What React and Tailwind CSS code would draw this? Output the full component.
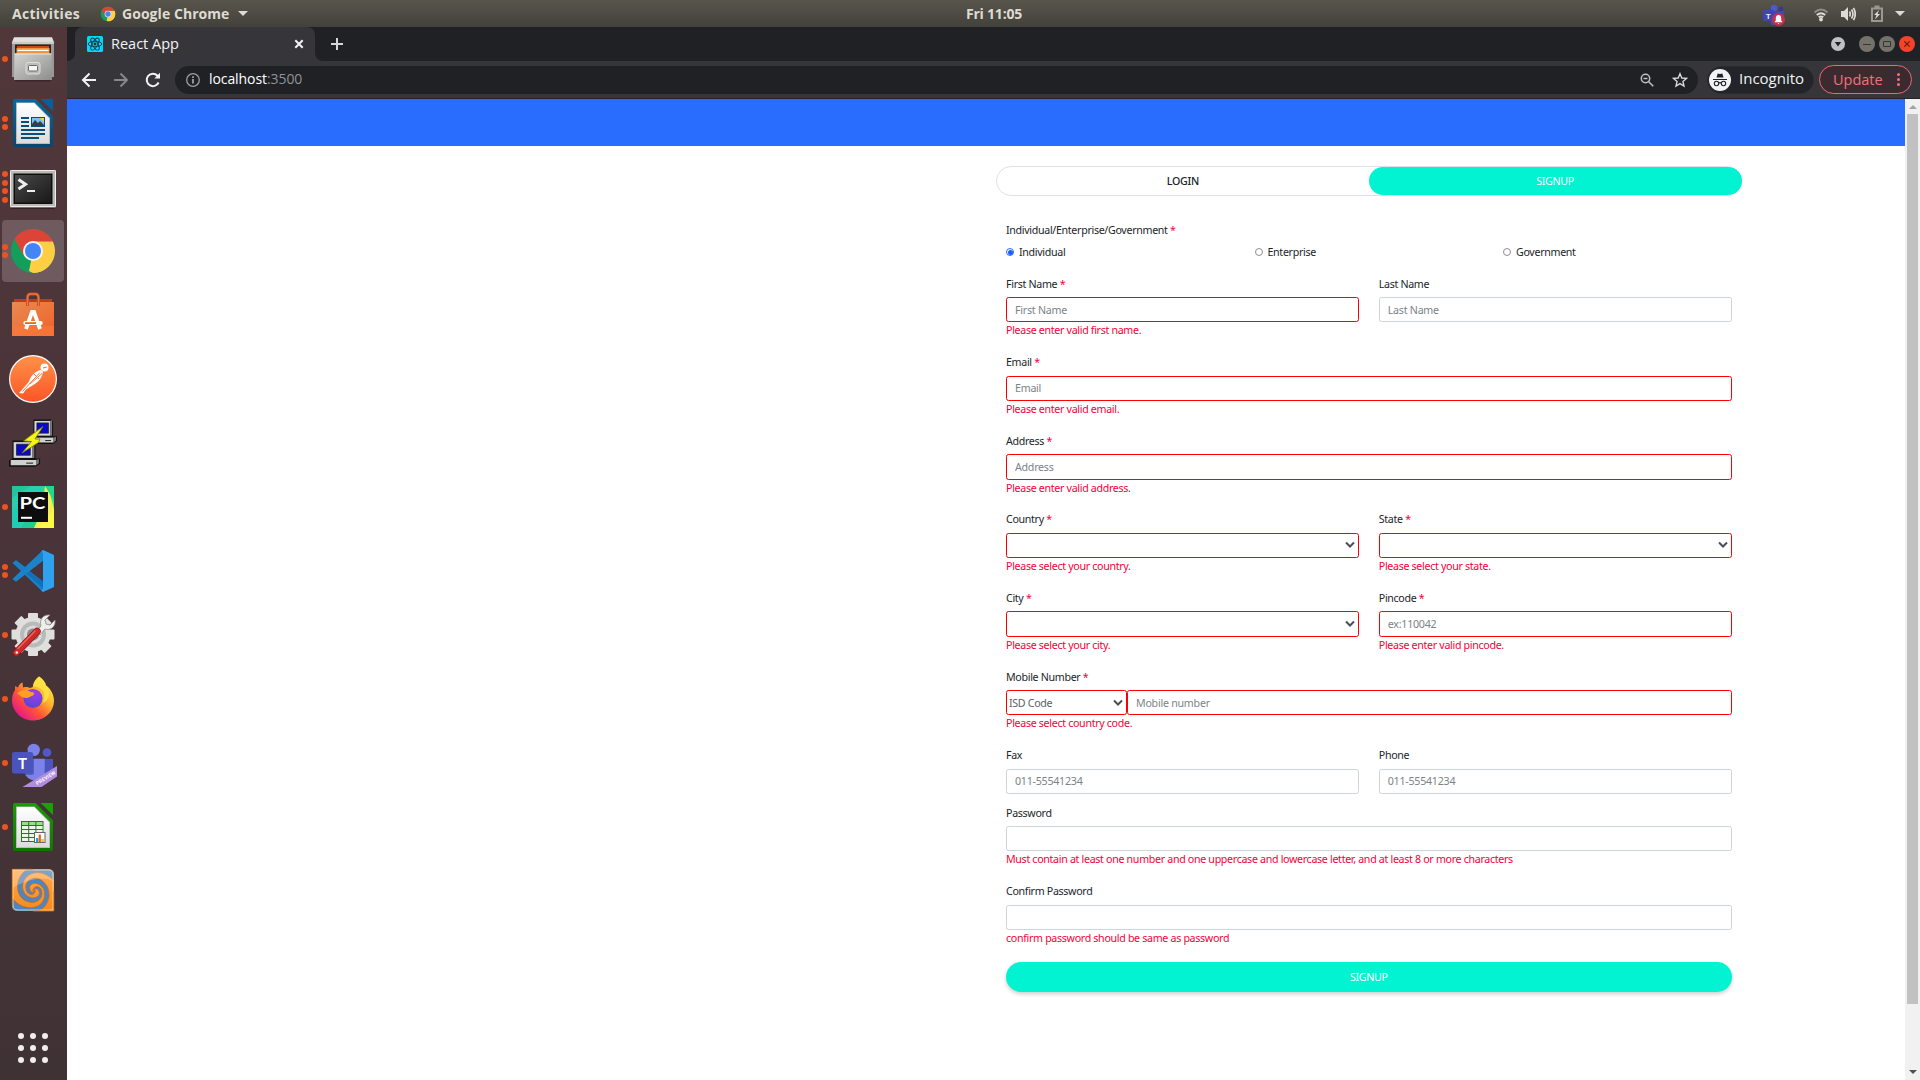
import React from "react";

/* ---------- dock icons, all on a 48 x 48 grid ---------- */

const Svg = ({ children, className = "size-12" }) => (
  <svg viewBox="0 0 48 48" className={className}>{children}</svg>
);

const Files = () => (
  <Svg>
    <defs>
      <linearGradient id="fa" x1="0" y1="0" x2="0" y2="1"><stop offset="0" stopColor="#e4e4e2" /><stop offset="1" stopColor="#a3a3a1" /></linearGradient>
      <linearGradient id="fb" x1="0" y1="0" x2="1" y2="1"><stop offset="0" stopColor="#d4d4d3" /><stop offset="1" stopColor="#8d8d8c" /></linearGradient>
    </defs>
    <rect x="6" y="44" width="36" height="2.5" rx="1" fill="#2c1c20" opacity=".6" />
    <path d="M5 2.3h38l2 5V42H3V7.300z" fill="url(#fa)" />
    <path d="M3 7.300h42V42H3z" fill="#999997" />
    <path d="M3 7h42v2H3z" fill="#c9c9c7" />
    <rect x="6" y="9.500" width="36" height="11" fill="#2b2421" />
    <rect x="8" y="11" width="32" height="8" fill="#c8481c" />
    <rect x="7.500" y="13" width="33" height="6" fill="#f0953b" />
    <rect x="8.500" y="14.800" width="31" height="1.200" fill="#fff" />
    <path d="M5.500 18.500h37L43 45H5z" fill="url(#fb)" />
    <path d="M5.500 18.500h37v1h-37z" fill="#e6e6e6" />
    <rect x="17" y="27.500" width="14" height="11.500" rx="2" fill="#bcbcbb" stroke="#dededd" />
    <rect x="19.500" y="30.500" width="9" height="5.500" rx="1" fill="#f7f7f7" stroke="#686868" />
  </Svg>
);

const Page = ({ id, a, b, dark }) => (
  <>
    <defs>
      <linearGradient id={id} x1="0" y1="0" x2="0" y2="1"><stop offset="0" stopColor={a} /><stop offset="1" stopColor={b} /></linearGradient>
      <linearGradient id={id + "p"} x1="0" y1="0" x2="0" y2="1"><stop offset="0" stopColor="#fff" /><stop offset="1" stopColor="#dcdcdc" /></linearGradient>
    </defs>
    <path d="M6 0h20.500L44 17.500V46a2 2 0 0 1-2 2H6a2 2 0 0 1-2-2V2a2 2 0 0 1 2-2z" fill={`url(#${id})`} />
    <path d="M7 3.500h18.500L41 19v26H7z" fill="#b8bcc0" />
    <path d="M8 4h17L40 19.200V44H8z" fill={`url(#${id}p)`} />
    <path d="M31.500 0H43a1 1 0 0 1 1 1v11z" fill={dark} />
  </>
);

const Writer = () => (
  <Svg>
    <Page id="wr" a="#0369a3" b="#0d456a" dark="#07609b" />
    <path d="M12 18h8v2h-8zM12 22h8v2h-8zM12 26h8v2h-8zM12 30h24v2H12zM12 34h24v2H12zM12 38h18v2H12z" fill="#0a4f7c" />
    <rect x="22" y="18" width="14" height="10" fill="#075078" />
    <rect x="23" y="19" width="12" height="8" fill="#7cc0ec" />
    <path d="M31 19h4v4z" fill="#f5cf35" />
    <path d="M23 27v-2l3-4 3 3 2-2 4 4v1z" fill="#373f43" />
  </Svg>
);

const Terminal = () => (
  <Svg>
    <defs>
      <linearGradient id="te" x1="0" y1="0" x2="1" y2="1"><stop offset="0" stopColor="#4a4a4a" /><stop offset=".5" stopColor="#303030" /><stop offset="1" stopColor="#191919" /></linearGradient>
    </defs>
    <rect x="2" y="43" width="44" height="3" rx="1" fill="#211618" opacity=".6" />
    <rect x="1" y="7" width="46" height="37.500" rx="1" fill="#b9b9b7" />
    <rect x="1.500" y="7.500" width="45" height="36" rx="1" fill="none" stroke="#ededec" />
    <rect x="4.500" y="10.500" width="39" height="30.500" fill="#0e0e0e" />
    <rect x="6" y="12" width="36" height="27.500" fill="url(#te)" />
    <path d="M9.500 16.500l7 4.700-7 4.700" fill="none" stroke="#eee" strokeWidth="3" />
    <path d="M18 28h8" stroke="#eee" strokeWidth="2" />
  </Svg>
);

const Chrome = ({ className }) => (
  <Svg className={className}>
    <circle cx="24" cy="24" r="22" fill="#119f5b" />
    <path d="M24 24H45.400A22 22 0 0 1 24 46L20 44z" fill="#ffce43" />
    <path d="M24 46a22 22 0 0 0 19.800-31.500H24L33 29z" fill="#ffce43" />
    <path d="M24 2A22 22 0 0 0 5.500 12.100L14.500 28.500 24 14h19.700A22 22 0 0 0 24 2z" fill="#db4437" />
    <circle cx="24" cy="24" r="10" fill="#f4f4f4" />
    <circle cx="24" cy="24" r="8" fill="#4285f4" />
  </Svg>
);

const Software = () => (
  <Svg>
    <defs>
      <linearGradient id="so" x1="0" y1="0" x2="1" y2="1"><stop offset="0" stopColor="#e98a52" /><stop offset="1" stopColor="#ee6227" /></linearGradient>
    </defs>
    <path d="M5 8h38v5H5z" fill="#b8401b" />
    <rect x="3" y="11" width="42" height="34" fill="url(#so)" />
    <path d="M3 35h42v10H3z" fill="#fa7a3e" opacity=".65" />
    <path d="M18.500 15V7q0-4 3-4h5q3 0 3 4v8" fill="none" stroke="#c64d20" strokeWidth="3" />
    <path d="M18.500 15V7q0-4 3-4h5q3 0 3 4v8" fill="none" stroke="#f0733f" strokeWidth="1.400" />
    <path d="M17 38l6-17h2l6 17" fill="none" stroke="#fff" strokeWidth="3.800" />
    <rect x="14.500" y="30" width="19" height="4" rx="1.500" fill="#fff" />
    <rect x="16" y="31.200" width="11" height="1.800" fill="#e9652c" />
  </Svg>
);

const Postman = () => (
  <Svg>
    <defs>
      <linearGradient id="po" x1="0" y1="0" x2="0" y2="1"><stop offset="0" stopColor="#ff9048" /><stop offset="1" stopColor="#fb5627" /></linearGradient>
    </defs>
    <circle cx="24" cy="24" r="24" fill="#fff" />
    <circle cx="24" cy="24" r="22.800" fill="url(#po)" />
    <circle cx="35.500" cy="12.500" r="4" fill="#fff" />
    <path d="M34 13l3.500-.8" stroke="#ff7a3d" strokeWidth="1.200" />
    <path d="M31.500 15c-6 2-10 6-11.500 11.500L12 36l-2 2 4 .5 3-4 8-5c5-3 8-7 9-13z" fill="#fff" />
    <path d="M31 17.500L13.500 36.500M25 19l5 5M33 18.500L21 29" stroke="#ff7a3d" strokeWidth="1" />
  </Svg>
);

const Computer = ({ x, y }) => (
  <g transform={`translate(${x} ${y})`}>
    <path d="M3 1h18l2 2v15h4v5l-4 3H0v-6l3-2z" fill="#111" />
    <path d="M4 2.500h16v15H4z" fill="#d6d6d2" />
    <path d="M20 2.500l2-1v16h-2z" fill="#777" />
    <path d="M6.500 4.500h12v10.500h-12z" fill="#0a0ac6" stroke="#222" strokeWidth=".7" />
    <path d="M1.500 19.500h22v5h-22z" fill="#d0d0cc" />
    <path d="M23.500 19.500l2.500-1v4l-2.500 2z" fill="#777" />
    <path d="M15 22.500h6" stroke="#222" />
  </g>
);

const Putty = () => (
  <Svg>
    <g transform="translate(21.500 -.5) scale(.98)"><Computer x={0} y={0} /></g>
    <g transform="translate(0 20.500) scale(1.150 1.050)"><Computer x={0} y={0} /></g>
    <path d="M34 7.500L21 17l-6.500 5 8 .5-9.500 11.500L29.500 23.500 31 20h-5z" fill="#f7f313" stroke="#77760a" strokeWidth=".8" />
  </Svg>
);

const PyCharm = () => (
  <Svg>
    <defs>
      <linearGradient id="py" x1="0" y1="0" x2="1" y2="0"><stop offset="0" stopColor="#22c2a0" /><stop offset=".55" stopColor="#1fcf93" /><stop offset="1" stopColor="#3ee58a" /></linearGradient>
    </defs>
    <rect x="3" y="3" width="42" height="42" fill="url(#py)" />
    <path d="M3 15L22 3H36L12 45H3z" fill="#29cfae" />
    <path d="M36 3l4 4 5 19v19H25l9-20z" fill="#f3ee52" />
    <path d="M3 28l8-6v23H3z" fill="#1fcfb5" />
    <path d="M36 3h9v15z" fill="#22d88f" />
    <path d="M45 26v19H30z" fill="#fcf84a" />
    <rect x="9" y="9" width="30" height="30" fill="#0d0d0d" />
    <text x="10.500" y="26.300" fill="#fff" fontSize="17.500" fontWeight="700" fontFamily="Lato, sans-serif" textLength="26" lengthAdjust="spacingAndGlyphs">PC</text>
    <rect x="12" y="33.800" width="11" height="2" fill="#fff" />
  </Svg>
);

const VSCode = () => (
  <Svg>
    <path d="M3.500 16l3.500-2.700L37 36.500l-3 8.500z" fill="#1270b8" />
    <path d="M3.500 32l3.500 2.700L37 11.500 34 3z" fill="#1b83cb" />
    <path d="M3.500 16l3.500-2.700 11 8.300-4 3.200zM14 24l20 17v4L9 21z" fill="#1a7fc6" />
    <path d="M34 3l11 5v32l-11 5-1.500-1.500 1.500-2V6.500L32.500 4z" fill="#2ea2ee" />
    <path d="M34 14.500v19L21.500 24z" fill="#4a3339" />
  </Svg>
);

const Tools = () => (
  <Svg>
    <g transform="translate(24 23.500)">
      <g fill="#dfdfdd">
        {[0, 45, 90, 135].map((a) => (
          <rect key={a} x="-5" y="-21.500" width="10" height="43" rx="1" transform={`rotate(${a})`} />
        ))}
        <circle r="17.500" />
      </g>
      <circle r="13" fill="#b9bab9" />
      <circle r="9" fill="#d9dad9" />
      <circle r="6" fill="#8d8789" />
    </g>
    <path d="M27 21l5-6c-2-6 2-12 9-11l-5 5 1 4 4 1 5-5c1 7-5 11-10 9l-5 6z" fill="#eeeeec" stroke="#8b8b8a" strokeWidth=".8" />
    <path d="M7.500 41.500L28 20.500" stroke="#901515" strokeWidth="7.400" strokeLinecap="round" />
    <path d="M7.500 41.500L28 20.500" stroke="#cf2929" strokeWidth="6" strokeLinecap="round" />
    <path d="M9 37.500L26 20" stroke="#e76a62" strokeWidth="1.400" strokeLinecap="round" />
    <circle cx="7.800" cy="41.500" r="1.300" fill="#eee" />
  </Svg>
);

const Firefox = () => (
  <Svg>
    <defs>
      <linearGradient id="ff" x1=".9" y1=".1" x2=".15" y2=".9"><stop offset="0" stopColor="#fff04a" /><stop offset=".35" stopColor="#ffb32c" /><stop offset=".65" stopColor="#ff5537" /><stop offset="1" stopColor="#e8148b" /></linearGradient>
      <radialGradient id="fg" cx=".6" cy=".2" r=".8"><stop offset="0" stopColor="#a13bea" /><stop offset="1" stopColor="#5a46d6" /></radialGradient>
    </defs>
    <path d="M30 1.500c4 3 6 5 7 9 3 1.500 8 8 8 15C45 37 35.500 45.500 24 45.500S3 36.500 3 25c0-4 1-7 3-10v-4l3 1.500C10 10 11 8.500 13.500 7.500l.5 5c3-.7 5-.5 7 .5 2-1 3-.5 3-2 1-4 3-7 6-9.500z" fill="url(#ff)" />
    <circle cx="24" cy="23.500" r="9.500" fill="url(#fg)" />
    <path d="M8 18c4-3 9-4 14-1 3 0 4 1.500 2 3.500-3 1-4 2-6 2.500-4 0-7-2-10-5z" fill="#ff9f24" />
    <path d="M30 1.500c-4 3-6 6-6 10 5 0 9 2 11 6 1 5 0 8-2 11 8-3 9-12 4-18-1-4-3-6-7-9z" fill="#ffe544" opacity=".85" />
  </Svg>
);

const Teams = () => (
  <Svg>
    <circle cx="38" cy="13.500" r="4.300" fill="#5059c9" />
    <path d="M33 20h11v12c0 5-5 7-9 5z" fill="#4c54bf" />
    <circle cx="24.700" cy="11" r="6.200" fill="#7b83eb" />
    <path d="M17 19.700h18.700V32c0 7-5 9.500-9.500 9.500S17 38 16 35z" fill="#7b83eb" />
    <rect x="4" y="15" width="21" height="21" rx="2" fill="#30357a" opacity=".45" />
    <rect x="3" y="13" width="21" height="21.500" rx="2" fill="#4b53bc" />
    <text x="13.500" y="29.500" textAnchor="middle" fill="#fff" fontSize="15" fontWeight="700" fontFamily="Lato, sans-serif">T</text>
    <path d="M13.500 48L48 27v10.500L32.500 48z" fill="#b18be0" />
    <text transform="translate(28.200 46.300) rotate(-32)" fill="#fff" fontSize="5" fontWeight="700" fontFamily="Roboto, sans-serif" textLength="22">PREVIEW</text>
  </Svg>
);

const Calc = () => (
  <Svg>
    <Page id="ca" a="#1a9b06" b="#127306" dark="#18a303" />
    <rect x="12" y="18" width="22.500" height="21" fill="#1d7d0e" />
    {[0, 1, 2, 3, 4].map((r) =>
      [0, 1, 2].map((c) => (
        <rect key={r + "-" + c} x={13 + c * 7.2} y={19 + r * 4} width="6.200" height="3" fill={r === 0 ? "#92e285" : "#eef6ec"} />
      ))
    )}
    <rect x="25.500" y="29.500" width="10.500" height="10" fill="#fff" stroke="#666" />
    <path d="M27 35h2.300v4H27z" fill="#2a9fe0" />
    <path d="M29.600 31.500h2.300V39h-2.300z" fill="#e0661c" />
    <path d="M32.300 36h2.500v3h-2.500z" fill="#f2c318" />
  </Svg>
);

const Swirl = () => (
  <Svg>
    <defs>
      <linearGradient id="sw" x1="0" y1="0" x2="0" y2="1"><stop offset="0" stopColor="#ffa94f" /><stop offset="1" stopColor="#f78a1c" /></linearGradient>
      <clipPath id="sc"><path d="M3 2h36q6 0 6 6v36H9q-6 0-6-6z" /></clipPath>
    </defs>
    <g clipPath="url(#sc)">
      <rect x="3" y="2" width="42" height="42" fill="url(#sw)" />
      <path d="M45 14C38 6 28 3 20 8c-8 5-9 17 0 22 7 3 12-2 10-6-1-3-5-3-6 0 0-6 8-6 9 1 1 8-8 13-16 9C6 29 6 12 16 4l5-2h24z" fill="#4d86c0" stroke="#cc6a15" strokeWidth=".8" />
      <path d="M3 31c7 9 18 12 26 8 8-4 9-17 2-21-6-4-12 0-10 5 1 3 4 3 5 0 1 6-8 6-9-1-2-8 8-14 15-9 11 7 10 22 1 29l-6 3H3z" fill="#4d86c0" stroke="#cc6a15" strokeWidth=".8" />
      <path d="M3 2h42v13C35 8 20 12 3 21z" fill="#fff" opacity=".25" />
    </g>
    <path d="M4 3h35q5 0 5 5v35H9q-5 0-5-5z" fill="none" stroke="#f9d9ad" strokeWidth="1" opacity=".8" />
    <path d="M3.300 38V2.300H24M24 44h20.700V24" fill="none" stroke="#e0791d" strokeWidth=".8" />
  </Svg>
);

const dock = [
  [Files, 1], [Writer, 2], [Terminal, 4], [Chrome, 2], [Software, 0], [Postman, 0], [Putty, 0],
  [PyCharm, 1], [VSCode, 2], [Tools, 1], [Firefox, 1], [Teams, 1], [Calc, 1], [Swirl, 0],
];

const Dock = () => (
  <aside className="flex w-[67px] shrink-0 flex-col bg-linear-to-b from-[#51373a] via-[#493439] to-[#3f3235]">
    {dock.map(([Icon, dots], i) => (
      <div key={i} className="flex h-16 shrink-0 items-center">
        <div className={`ml-0.5 flex h-[62px] w-[62px] items-center rounded-[4px] ${i === 3 ? "bg-[#6f5a60]" : ""}`}>
          <div className="flex w-[7px] shrink-0 flex-col items-start gap-[2.400px]">
            {Array.from({ length: dots }, (_, d) => (
              <span key={d} className="size-[6px] rounded-full bg-[#e95420]" />
            ))}
          </div>
          <Icon className="size-12" />
        </div>
      </div>
    ))}
    <div className="mt-auto mb-[17px] ml-[18px] grid w-[30px] grid-cols-3 gap-[6px]">
      {Array.from({ length: 9 }, (_, d) => (
        <span key={d} className="size-[6px] rounded-full bg-[#f1efee]" />
      ))}
    </div>
  </aside>
);

/* ---------- desktop top bar ---------- */

const TopBar = () => (
  <header className="grid h-[27px] shrink-0 grid-cols-[1fr_auto_1fr] items-center bg-linear-to-b from-[#58554c] to-[#42413b] font-['Open_Sans',sans-serif] text-[14px] font-bold text-[#dfdbd2]">
    <div className="flex items-center pl-3">
      <span className="w-[68px] whitespace-nowrap tracking-[0.300px]">Activities</span>
      <Chrome className="ml-[20px] size-4" />
      <span className="ml-[6px] w-[111px] whitespace-nowrap tracking-[0.050px]">Google Chrome</span>
      <span className="ml-[5px] border-x-[5px] border-t-[5px] border-x-transparent border-t-[#dfdbd2]" />
    </div>
    <span className="ml-[68px] w-[60px] whitespace-nowrap text-center tracking-[-0.200px]">Fri 11:05</span>
    <div className="flex items-center justify-end pr-[15px]">
      <svg viewBox="0 0 24 24" className="size-6">
        <circle cx="13" cy="6" r="3.300" fill="#5059c9" /><circle cx="20" cy="7" r="2.300" fill="#35398e" />
        <path d="M9 9h14v8l-6 6H10z" fill="#4448b0" />
        <rect x="2" y="8" width="11" height="11" rx="1" fill="#4045b5" />
        <text x="7.300" y="16.500" textAnchor="middle" fill="#eee" fontSize="8" fontWeight="700" fontFamily="Roboto, sans-serif">T</text>
        <circle cx="17.500" cy="17.500" r="6.500" fill="#c4314b" />
        <path d="M13.800 20.300v-.8l1-1v-2.300c0-2 1.200-3.200 2.700-3.200s2.700 1.200 2.700 3.200v2.300l1 1v.8zM16.500 21h2l-1 1z" fill="#fff" />
      </svg>
      <svg viewBox="0 0 16 16" className="ml-[28px] size-4" fill="none" strokeWidth="2" strokeLinecap="butt">
        <path d="M1.500 6.500c4-4 9-4 13 0" stroke="#8e8b83" />
        <path d="M3.800 9c3-2.600 5.400-2.600 8.400 0M5.700 11.300c1.700-1.300 2.900-1.300 4.600 0" stroke="#dfdbd2" />
        <circle cx="8" cy="13.500" r="1.900" fill="#dfdbd2" />
      </svg>
      <svg viewBox="0 0 16 16" className="ml-[11px] size-4" fill="none" stroke="#dfdbd2" strokeWidth="1.700">
        <path d="M1 5h3l4-4v14l-4-4H1z" fill="#dfdbd2" stroke="none" />
        <path d="M9.500 5.500q1.500 2.500 0 5M11.500 3.500q3 4.500 0 9M13.500 1.800q3.500 6.200 0 12.400" />
      </svg>
      <svg viewBox="0 0 12 17" className="ml-[15px] h-[17px] w-3">
        <path d="M1 3.500h10v12.500H1z" fill="none" stroke="#9b988f" strokeWidth="2" />
        <path d="M3.500.5h5v3h-5z" fill="#9b988f" />
        <path d="M8 5l-5 5h2.500L4 14.500l5-5.500H6.500z" fill="#dfdbd2" />
      </svg>
      <span className="ml-[12px] border-x-[5px] border-t-[5px] border-x-transparent border-t-[#dfdbd2]" />
    </div>
  </header>
);

/* ---------- browser chrome ---------- */

const ReactMark = () => (
  <svg viewBox="0 0 16 16" className="size-4">
    <rect width="16" height="16" rx="1.500" fill="#00d8ff" />
    <g fill="none" stroke="#20323a" strokeWidth=".9">
      <ellipse cx="8" cy="8" rx="6.800" ry="2.700" />
      <ellipse cx="8" cy="8" rx="6.800" ry="2.700" transform="rotate(60 8 8)" />
      <ellipse cx="8" cy="8" rx="6.800" ry="2.700" transform="rotate(120 8 8)" />
    </g>
    <circle cx="8" cy="8" r="1.400" fill="#20323a" />
  </svg>
);

const TabStrip = () => (
  <div className="flex h-[34px] shrink-0 items-stretch bg-[#202124]">
    <div className="w-2 bg-[#36353a]"><div className="h-full rounded-br-lg bg-[#202124]" /></div>
    <div className="flex w-[240px] items-center rounded-t-lg bg-[#36353a] pl-3 pr-[9px]">
      <ReactMark />
      <span className="ml-2 pb-px text-[14.500px] text-[#f1f3f4]">React App</span>
      <svg viewBox="0 0 14 14" className="ml-auto size-[14px]" stroke="#f1f3f4" strokeWidth="2"><path d="M3.300 3.300l7.400 7.400M10.700 3.300l-7.400 7.400" /></svg>
    </div>
    <div className="w-2 bg-[#36353a]"><div className="h-full rounded-bl-lg bg-[#202124]" /></div>
    <svg viewBox="0 0 14 14" className="ml-[7px] size-[14px] self-center" stroke="#d5d7da" strokeWidth="2"><path d="M7 1v12M1 7h12" /></svg>
    <div className="ml-auto flex items-center gap-1 pr-[5px]">
      <svg viewBox="0 0 14 14" className="mr-[10px] size-[14px]"><circle cx="7" cy="7" r="7" fill="#bdc1c6" /><path d="M3.800 5h6.400L7 9.500z" fill="#202124" /></svg>
      <svg viewBox="0 0 16 16" className="size-4"><circle cx="8" cy="8" r="8" fill="#74726a" /><path d="M4 8.500h8" stroke="#35342f" /></svg>
      <svg viewBox="0 0 16 16" className="size-4"><circle cx="8" cy="8" r="8" fill="#74726a" /><path d="M4.500 5.500h7v5h-7z" fill="none" stroke="#35342f" /></svg>
      <svg viewBox="0 0 16 16" className="size-4"><circle cx="8" cy="8" r="8" fill="#f4432b" /><path d="M5.300 5.300l5.400 5.400M10.700 5.300l-5.400 5.400" stroke="#6b1a0c" strokeWidth="1.200" /></svg>
    </div>
  </div>
);

const Toolbar = () => (
  <div className="flex h-[38px] shrink-0 items-center border-b border-[#232327] bg-[#36353a] pl-[14px] pr-2">
    <svg viewBox="0 0 16 16" className="size-4 shrink-0" fill="none" stroke="#f1f3f4" strokeWidth="2"><path d="M15 8H2M8.500 1.500L2 8l6.500 6.500" /></svg>
    <svg viewBox="0 0 16 16" className="ml-4 size-4 shrink-0" fill="none" stroke="#86888c" strokeWidth="2"><path d="M1 8h13M7.500 1.500L14 8l-6.500 6.500" /></svg>
    <svg viewBox="0 0 16 16" className="ml-4 size-4 shrink-0" fill="none" stroke="#f1f3f4" strokeWidth="2"><path d="M13.600 10.500A6.200 6.200 0 1 1 12.500 3.700L14 5.300" /><path d="M15 .8v5.700H9.300z" fill="#f1f3f4" stroke="none" /></svg>
    <div className="ml-[14px] flex h-7 w-[1523px] shrink-0 items-center rounded-full bg-[#202124] pl-[11px] pr-[10px]">
      <svg viewBox="0 0 14 14" className="size-[14px]" fill="none" stroke="#9aa0a6" strokeWidth="1.300"><circle cx="7" cy="7" r="6.300" /><path d="M7 6v4.500M7 3.200v1.700" strokeWidth="1.800" /></svg>
      <span className="ml-[9px] pb-[2px] text-[14px] tracking-[-0.080px] text-white">localhost<span className="text-[#8f9296]">:3500</span></span>
      <svg viewBox="0 0 14 14" className="ml-auto size-[14px]" fill="none" stroke="#bdc1c6" strokeWidth="1.500"><circle cx="5.500" cy="5.500" r="4.200" /><path d="M8.700 8.700l4.600 4.600M3.500 5.500h4" /></svg>
      <svg viewBox="0 0 24 24" className="ml-[18px] size-4" fill="none" stroke="#dadce0" strokeWidth="2"><path d="M12 2.500l2.700 6.500 7 .6-5.300 4.600 1.600 6.900L12 17.400l-6 3.700 1.600-6.900L2.300 9.600l7-.6z" /></svg>
    </div>
    <div className="ml-[9px] flex h-7 w-[107px] shrink-0 items-center rounded-full border border-[#2b2c30] bg-[#232428] pl-px">
      <svg viewBox="0 0 22 22" className="size-[22px]"><circle cx="11" cy="11" r="11" fill="#f1f3f4" /><path d="M7.500 8.500L8.700 4.500l2.300.6 2.300-.6 1.200 4z" fill="#202124" /><g fill="none" stroke="#202124" strokeWidth="1.100"><path d="M4 10.500h14M9.800 14q1.200-.8 2.400 0" /><circle cx="7.500" cy="14.500" r="2.200" /><circle cx="14.500" cy="14.500" r="2.200" /></g></svg>
      <span className="ml-[8px] pb-[2px] text-[15px] text-[#f1f3f4]">Incognito</span>
    </div>
    <div className="ml-[5px] flex h-[29px] w-[93px] shrink-0 items-center rounded-full border border-[#ea6b70] bg-[#3b2b30] pl-[13px] text-[#f07178]">
      <span className="text-[14.500px]">Update</span>
      <span className="ml-auto mr-[11px] flex flex-col gap-[2px]">
        <i className="size-[3px] rounded-full bg-current" /><i className="size-[3px] rounded-full bg-current" /><i className="size-[3px] rounded-full bg-current" />
      </span>
    </div>
  </div>
);

/* ---------- form ---------- */

const Field = ({ label, required, error, invalid = Boolean(error), placeholder, select, children, short }) => (
  <div className={`flex flex-col ${short ? "h-[57.330px]" : "h-[78.600px]"}`}>
    <label className="mb-[5.330px] block h-4 leading-4">
      {label}{required && <span className="text-[#f7003a]"> *</span>}
    </label>
    {children || <Control invalid={invalid} placeholder={placeholder} select={select} />}
    {error && <small className="block text-[10.670px] leading-4 text-[#f7003a]">{error}</small>}
  </div>
);

const Control = ({ invalid, placeholder, select, value, className = "w-full" }) => (
  <div className={`flex h-[25.330px] shrink-0 items-center rounded-[2.500px] border ${invalid ? "border-[#ff0000]" : "border-[#ced4da]"} ${select ? "pl-[2px] pr-[3px]" : "px-2"} ${className}`}>
    {select ? (
      <>
        <span className="text-[#5a6168]">{value}</span>
        <svg viewBox="0 0 10 8" className="ml-auto h-2 w-[10px]" fill="none" stroke="#495057" strokeWidth="2"><path d="M1 1.500l4 4 4-4" /></svg>
      </>
    ) : (
      <input className="w-full bg-transparent leading-4 tracking-[-0.250px] outline-none placeholder:text-[#7b838a]" placeholder={placeholder} />
    )}
  </div>
);

const Radio = ({ label, checked }) => (
  <label className="flex items-center gap-[5px] leading-4">
    <span className={`flex size-2 items-center justify-center rounded-full border ${checked ? "border-[#2a6bff]" : "border-[#8f8f8f]"}`}>
      {checked && <span className="size-[5px] rounded-full bg-[#1a5cff]" />}
    </span>
    {label}
  </label>
);

const SignupForm = () => (
  <div className="ml-[929px] w-[745.500px] pt-5 font-['Noto_Sans',sans-serif] text-[10.670px] tracking-[-0.320px] text-[#212529]">
    <div className="grid h-[30px] grid-cols-2 rounded-full border border-[#dee2e6] text-center leading-7">
      <div className="font-medium">LOGIN</div>
      <div className="-mr-px rounded-full bg-[#02f3d1] text-white">SIGNUP</div>
    </div>
    <div className="px-[10px] pt-[26px]">
      <div className="h-4 leading-4">Individual/Enterprise/Government<span className="text-[#f7003a]"> *</span></div>
      <div className="mt-[6px] mb-[15.700px] -mr-5 grid grid-cols-3">
        <Radio label="Individual" checked />
        <Radio label="Enterprise" />
        <Radio label="Government" />
      </div>
      <div className="grid grid-cols-2 gap-x-5">
        <Field label="First Name" required placeholder="First Name" error="Please enter valid first name." />
        <Field label="Last Name" placeholder="Last Name" />
      </div>
      <Field label="Email" required placeholder="Email" error="Please enter valid email." />
      <Field label="Address" required placeholder="Address" error="Please enter valid address." />
      <div className="grid grid-cols-2 gap-x-5">
        <Field label="Country" required select error="Please select your country." />
        <Field label="State" required select error="Please select your state." />
        <Field label="City" required select error="Please select your city." />
        <Field label="Pincode" required placeholder="ex:110042" error="Please enter valid pincode." />
      </div>
      <Field label="Mobile Number" required error="Please select country code.">
        <div className="flex">
          <Control invalid select value="ISD Code" className="w-[121px]" />
          <Control invalid placeholder="Mobile number" className="flex-1" />
        </div>
      </Field>
      <div className="grid grid-cols-2 gap-x-5">
        <Field short label="Fax" placeholder="011-55541234" />
        <Field short label="Phone" placeholder="011-55541234" />
      </div>
      <Field label="Password" invalid={false} error="Must contain at least one number and one uppercase and lowercase letter, and at least 8 or more characters" />
      <Field label="Confirm Password" invalid={false} error="confirm password should be same as password" />
      <button className="mt-[0.500px] block h-[30px] w-full rounded-full bg-[#02f3d1] text-white shadow-[0_2px_4px_rgba(0,0,0,0.2)]">SIGNUP</button>
    </div>
  </div>
);

const Scrollbar = () => (
  <div className="flex w-[15px] shrink-0 flex-col items-center justify-between bg-[#f1f1f1] py-[6px]">
    <span className="border-x-4 border-b-4 border-x-transparent border-b-[#a3a3a3]" />
    <div className="mt-[5px] mb-auto h-[890px] w-[11px] bg-[#c1c1c1]" />
    <span className="border-x-4 border-t-4 border-x-transparent border-t-[#505050]" />
  </div>
);

export default function App() {
  return (
    <div className="flex h-[1080px] w-[1920px] flex-col overflow-hidden">
      <TopBar />
      <div className="flex min-h-0 flex-1">
        <Dock />
        <div className="flex min-w-0 flex-1 flex-col font-['Open_Sans',sans-serif]">
          <TabStrip />
          <Toolbar />
          <div className="flex min-h-0 flex-1 bg-white">
            <main className="flex-1">
              <div className="h-[47px] bg-[#286dff]" />
              <SignupForm />
            </main>
            <Scrollbar />
          </div>
        </div>
      </div>
    </div>
  );
}
